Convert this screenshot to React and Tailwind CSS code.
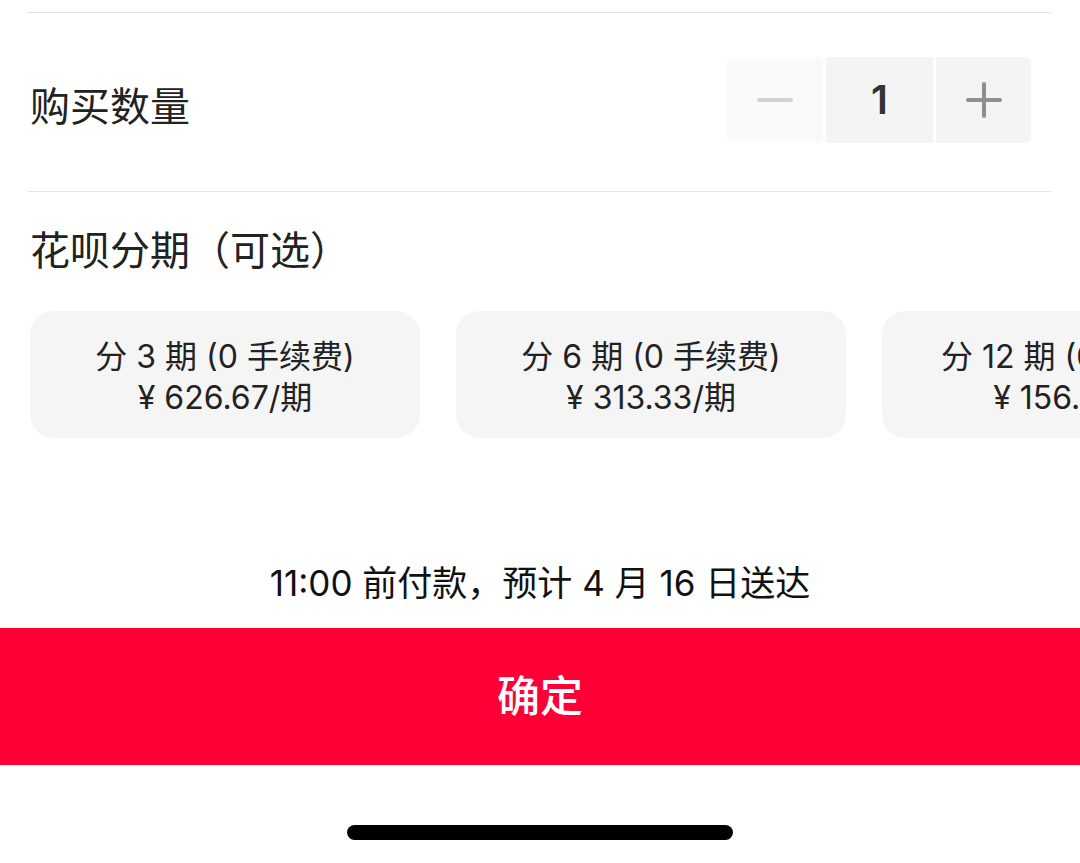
import React from 'react';

const plans = [
  { n: '3', price: '626.67' },
  { n: '6', price: '313.33' },
  { n: '12', price: '156.67' },
];

const font = { fontFamily: 'Inter, "Noto Sans CJK SC", "Noto Sans", sans-serif' };

const App = () => {
  return (
    <div className="w-[1080px] h-[863px] bg-white overflow-hidden flex flex-col" style={font}>
      {/* top divider */}
      <div className="mt-[12px] ml-[28px] mr-[29px] border-t border-[#e3e3e3]" />

      {/* quantity row */}
      <div className="h-[178px] flex items-center justify-between pl-[30px] pr-[49px]">
        <span className="text-[40px] text-[#222] leading-none mt-[10px]">购买数量</span>
        <div className="flex items-stretch h-[86px] gap-[3px] mb-[4px]">
          <button className="w-[96px] bg-[#fafafa] rounded-l-[6px] flex items-center justify-center">
            <span className="block w-[36px] h-[4px] bg-[#d2d2d2] rounded-sm" />
          </button>
          <div className="w-[107px] bg-[#f4f4f4] flex items-center justify-center text-[40px] font-semibold text-[#333]">
            1
          </div>
          <button className="w-[95px] bg-[#f4f4f4] rounded-r-[6px] flex items-center justify-center relative">
            <span className="block w-[36px] h-[4px] bg-[#8f8f8f] rounded-sm" />
            <span className="absolute w-[4px] h-[36px] bg-[#8f8f8f] rounded-sm" />
          </button>
        </div>
      </div>

      <div className="ml-[28px] mr-[29px] border-t border-[#e3e3e3]" />

      {/* installments */}
      <div className="pl-[30px] pt-[37px]">
        <h3 className="text-[40px] text-[#222] leading-[44px]">花呗分期（可选）</h3>
        <div className="flex gap-[36px] mt-[38px] w-[1200px]">
          {plans.map((p) => (
            <div
              key={p.n}
              className="w-[390px] h-[127px] shrink-0 bg-[#f5f5f6] rounded-[24px] flex flex-col items-center justify-center pt-[4px] text-[32px] leading-[41px] text-[#222]"
            >
              <p>分 {p.n} 期 (0 手续费)</p>
              <p>¥ {p.price}/期</p>
            </div>
          ))}
        </div>
      </div>

      {/* delivery note */}
      <p className="mt-[125px] text-center text-[35px] leading-[40px] text-[#111]">
        11:00 前付款，预计 4 月 16 日送达
      </p>

      {/* confirm button */}
      <button className="mt-[25px] h-[137px] w-full bg-[#ff0036] text-white text-[43px] font-medium flex items-center justify-center">
        确定
      </button>

      {/* home indicator */}
      <div className="flex justify-center mt-[60px]">
        <div className="w-[386px] h-[15px] rounded-full bg-black" />
      </div>
    </div>
  );
};

export default App;
